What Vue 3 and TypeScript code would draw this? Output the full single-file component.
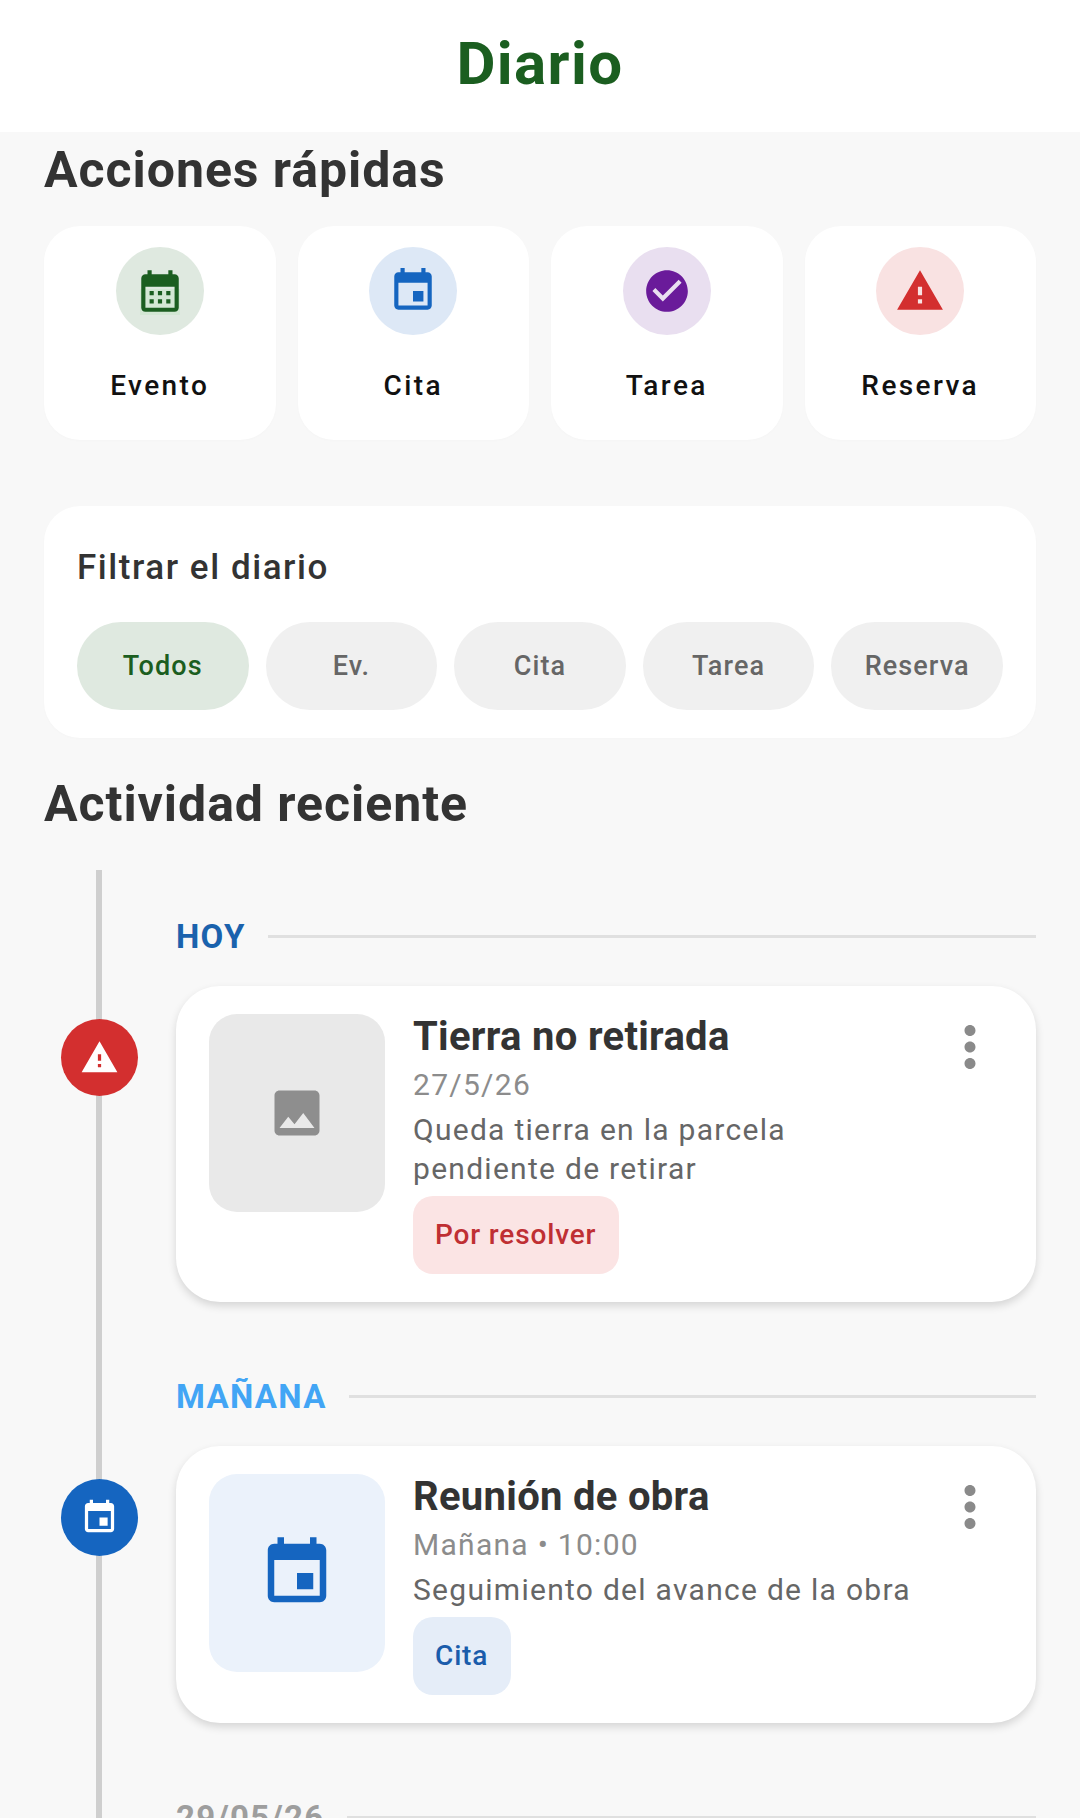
<script setup lang="ts">
import { ref } from 'vue'

interface QuickAction {
  label: string,
  tone: string,
  icon: string
}

interface Entry {
  heading: string,
  headingTone: string,
  tone: string,
  dotIcon: string,
  thumbIcon: string,
  title: string,
  date: string,
  desc: string[],
  chip: string
}

const calendarIcon = 'M19 4h-1V2h-2v2H8V2H6v2H5c-1.11 0-1.99.9-1.99 2L3 20c0 1.1.89 2 2 2h14c1.1 0 2-.9 2-2V6c0-1.1-.9-2-2-2zm0 16H5V10h14v10zM9 14H7v-2h2v2zm4 0h-2v-2h2v2zm4 0h-2v-2h2v2zm-8 4H7v-2h2v2zm4 0h-2v-2h2v2zm4 0h-2v-2h2v2z'
const eventIcon = 'M17 12h-5v5h5v-5zM16 1v2H8V1H6v2H5c-1.11 0-1.99.9-1.99 2L3 19c0 1.1.89 2 2 2h14c1.1 0 2-.9 2-2V5c0-1.1-.9-2-2-2h-1V1h-2zm3 18H5V8h14v11z'
const checkIcon = 'M12 2C6.48 2 2 6.48 2 12s4.48 10 10 10 10-4.48 10-10S17.52 2 12 2zm-2 15l-5-5 1.41-1.41L10 14.17l7.59-7.59L19 8l-9 9z'
const warningIcon = 'M1 21h22L12 2 1 21zm12-3h-2v-2h2v2zm0-4h-2v-4h2v4z'
const imageIcon = 'M21 19V5c0-1.1-.9-2-2-2H5c-1.1 0-2 .9-2 2v14c0 1.1.9 2 2 2h14c1.1 0 2-.9 2-2zM8.5 13.5l2.5 3.01L14.5 12l4.5 6H5l3.5-4.5z'
const moreIcon = 'M12 8c1.1 0 2-.9 2-2s-.9-2-2-2-2 .9-2 2 .9 2 2 2zm0 2c-1.1 0-2 .9-2 2s.9 2 2 2 2-.9 2-2-.9-2-2-2zm0 6c-1.1 0-2 .9-2 2s.9 2 2 2 2-.9 2-2-.9-2-2-2z'

const actions: QuickAction[] = [
  { label: 'Evento', tone: 'green', icon: calendarIcon },
  { label: 'Cita', tone: 'blue', icon: eventIcon },
  { label: 'Tarea', tone: 'purple', icon: checkIcon },
  { label: 'Reserva', tone: 'red', icon: warningIcon }
]

const filters = ['Todos', 'Ev.', 'Cita', 'Tarea', 'Reserva']
const activeFilter = ref('Todos')

const entries: Entry[] = [
  {
    heading: 'HOY',
    headingTone: 'today',
    tone: 'red',
    dotIcon: warningIcon,
    thumbIcon: imageIcon,
    title: 'Tierra no retirada',
    date: '27/5/26',
    desc: ['Queda tierra en la parcela', 'pendiente de retirar'],
    chip: 'Por resolver'
  },
  {
    heading: 'MAÑANA',
    headingTone: 'tomorrow',
    tone: 'blue',
    dotIcon: eventIcon,
    thumbIcon: eventIcon,
    title: 'Reunión de obra',
    date: 'Mañana • 10:00',
    desc: ['Seguimiento del avance de la obra'],
    chip: 'Cita'
  }
]
</script>

<template>
  <div class="screen">
    <header class="topbar">Diario</header>

    <main class="page">
      <h2 class="section-title">Acciones rápidas</h2>
      <div class="quick-grid">
        <div v-for="a in actions" :key="a.label" class="quick-card">
          <span class="quick-circle" :class="a.tone">
            <span v-if="a.tone === 'green'" class="cal-fill"></span>
            <svg viewBox="0 0 24 24" width="50" height="50"><path :d="a.icon" /></svg>
          </span>
          <span class="quick-label">{{ a.label }}</span>
        </div>
      </div>

      <section class="filter-card">
        <h3 class="filter-title">Filtrar el diario</h3>
        <div class="filter-row">
          <button
            v-for="f in filters"
            :key="f"
            class="filter-chip"
            :class="{ active: f === activeFilter }"
            @click="activeFilter = f"
          >{{ f }}</button>
        </div>
      </section>

      <h2 class="section-title activity-title">Actividad reciente</h2>

      <div class="timeline">
        <div class="timeline-line"></div>

        <div v-for="e in entries" :key="e.heading" class="group">
          <div class="day-row">
            <span class="day-label" :class="e.headingTone">{{ e.heading }}</span>
            <span class="day-rule"></span>
          </div>
          <article class="entry-card">
            <span class="dot" :class="e.tone">
              <svg viewBox="0 0 24 24" width="39" height="39"><path :d="e.dotIcon" /></svg>
            </span>
            <div class="thumb" :class="e.tone">
              <svg v-if="e.tone === 'red'" viewBox="0 0 24 24" width="60" height="60"><path :d="e.thumbIcon" /></svg>
              <svg v-else viewBox="0 0 24 24" width="78" height="78"><path :d="e.thumbIcon" /></svg>
            </div>
            <div class="entry-body">
              <h4 class="entry-title">{{ e.title }}</h4>
              <div class="entry-date">{{ e.date }}</div>
              <p v-for="line in e.desc" :key="line" class="entry-desc">{{ line }}</p>
              <span class="entry-chip" :class="e.tone">{{ e.chip }}</span>
            </div>
            <svg class="more" viewBox="0 0 24 24" width="66" height="66"><path :d="moreIcon" /></svg>
          </article>
        </div>

        <div class="group">
          <div class="day-row">
            <span class="day-label later">29/05/26</span>
            <span class="day-rule"></span>
          </div>
        </div>
      </div>
    </main>
  </div>
</template>

<style>
html, body {
  margin: 0;
  background: #f8f8f8;
}
</style>

<style scoped>
.screen {
  height: 1818px;
  overflow: hidden;
  background: #f8f8f8;
  font-family: Roboto, "Liberation Sans", sans-serif;
  color: #333;
}

.topbar {
  height: 132px;
  line-height: 128px;
  background: #fff;
  text-align: center;
  font-size: 60px;
  font-weight: 700;
  letter-spacing: 1.4px;
  color: #1b5e20;
}

.page {
  padding: 0 44px;
}

.section-title {
  margin: 9px 0 27px;
  font-size: 50px;
  line-height: 58px;
  font-weight: 700;
  letter-spacing: 0.95px;
  color: #333;
}

.quick-grid {
  display: grid;
  grid-template-columns: repeat(4, 1fr);
  gap: 22px;
}

.quick-card {
  display: flex;
  flex-direction: column;
  align-items: center;
  height: 214px;
  box-sizing: border-box;
  padding-top: 21px;
  background: #fff;
  border-radius: 36px;
  box-shadow: 0 1px 3px rgba(0, 0, 0, 0.015);
}

.quick-circle {
  position: relative;
  display: flex;
  align-items: center;
  justify-content: center;
  width: 88px;
  height: 88px;
  border-radius: 50%;
}

.quick-circle svg {
  position: relative;
}

.cal-fill {
  position: absolute;
  left: 24px;
  top: 42px;
  width: 40px;
  height: 26px;
  background: #d3e7d4;
}

.quick-circle.green { background: #dfe9e0; }
.quick-circle.green path { fill: #1b5e20; }
.quick-circle.blue { background: #dde8f6; }
.quick-circle.blue path { fill: #1565c0; }
.quick-circle.purple { background: #e9dff0; }
.quick-circle.purple path { fill: #6a1b9a; }
.quick-circle.red { background: #f9e2e2; }
.quick-circle.red path { fill: #d32f2f; }

.quick-label {
  margin-top: 29px;
  font-size: 28px;
  line-height: 44px;
  font-weight: 500;
  letter-spacing: 2.4px;
  color: #111;
}

.filter-card {
  margin-top: 66px;
  padding: 33px 33px 28px;
  background: #fff;
  border-radius: 36px;
  box-shadow: 0 1px 3px rgba(0, 0, 0, 0.015);
}

.filter-title {
  margin: 0 0 25px;
  font-size: 35px;
  line-height: 58px;
  font-weight: 500;
  letter-spacing: 1.55px;
  color: #333;
}

.filter-row {
  display: flex;
  gap: 17px;
}

.filter-chip {
  flex: 1;
  height: 88px;
  padding: 0;
  border: none;
  border-radius: 44px;
  background: #f0f0f0;
  font-family: inherit;
  font-size: 27px;
  font-weight: 500;
  letter-spacing: 1.1px;
  color: #666;
}

.filter-chip.active {
  background: #dfe9e0;
  color: #1b5e20;
}

.activity-title {
  margin: 37px 0 37px;
}

.timeline {
  position: relative;
  padding: 46px 0 0 132px;
}

.timeline-line {
  position: absolute;
  left: 52px;
  top: 0;
  bottom: 0;
  width: 6px;
  background: #cfcfcf;
}

.group + .group {
  margin-top: 74px;
}

.day-row {
  display: flex;
  align-items: center;
  gap: 22px;
  height: 40px;
  margin-bottom: 30px;
}

.day-label {
  font-size: 33px;
  font-weight: 700;
  letter-spacing: 1.3px;
}

.day-label.today { color: #1a62ad; }
.day-label.tomorrow { color: #42a5f5; }
.day-label.later { color: #9e9e9e; }

.day-rule {
  flex: 1;
  height: 3px;
  background: #e0e0e0;
}

.entry-card {
  position: relative;
  display: flex;
  gap: 28px;
  padding: 28px 33px 28px;
  background: #fff;
  border-radius: 44px;
  box-shadow: 0 4px 8px rgba(0, 0, 0, 0.14);
}

.dot {
  position: absolute;
  left: -115px;
  top: 33px;
  display: flex;
  align-items: center;
  justify-content: center;
  width: 77px;
  height: 77px;
  border-radius: 50%;
}

.dot path { fill: #fff; }
.dot.red { background: #d32f2f; }
.dot.blue { background: #1565c0; }

.thumb {
  flex: none;
  display: flex;
  align-items: center;
  justify-content: center;
  width: 176px;
  height: 198px;
  border-radius: 28px;
}

.thumb.red { background: #e9e9e9; }
.thumb.red path { fill: #8e8e8e; }
.thumb.blue { background: #ebf2fb; }
.thumb.blue path { fill: #1565c0; }

.entry-body {
  flex: 1;
  min-width: 0;
}

.entry-title {
  margin: 0 0 3px;
  font-size: 40px;
  line-height: 46px;
  font-weight: 700;
  letter-spacing: 0.3px;
  color: #333;
}

.entry-date {
  margin-bottom: 3px;
  font-size: 30px;
  line-height: 44px;
  letter-spacing: 1.28px;
  color: #8c8c8c;
}

.entry-desc {
  margin: 0;
  font-size: 30px;
  line-height: 39px;
  letter-spacing: 1.28px;
  color: #666;
}

.entry-chip {
  display: inline-block;
  margin-top: 8px;
  padding: 0 23px 0 22px;
  height: 78px;
  line-height: 78px;
  border-radius: 20px;
  font-size: 28px;
  font-weight: 500;
  letter-spacing: 0.85px;
}

.entry-chip.red { background: #fbe4e4; color: #bf2f33; }
.entry-chip.blue { background: #e5edf8; color: #1a5cab; }

.more {
  position: absolute;
  left: 761px;
  top: 28px;
}

.more path { fill: #8a8a8a; }
</style>
